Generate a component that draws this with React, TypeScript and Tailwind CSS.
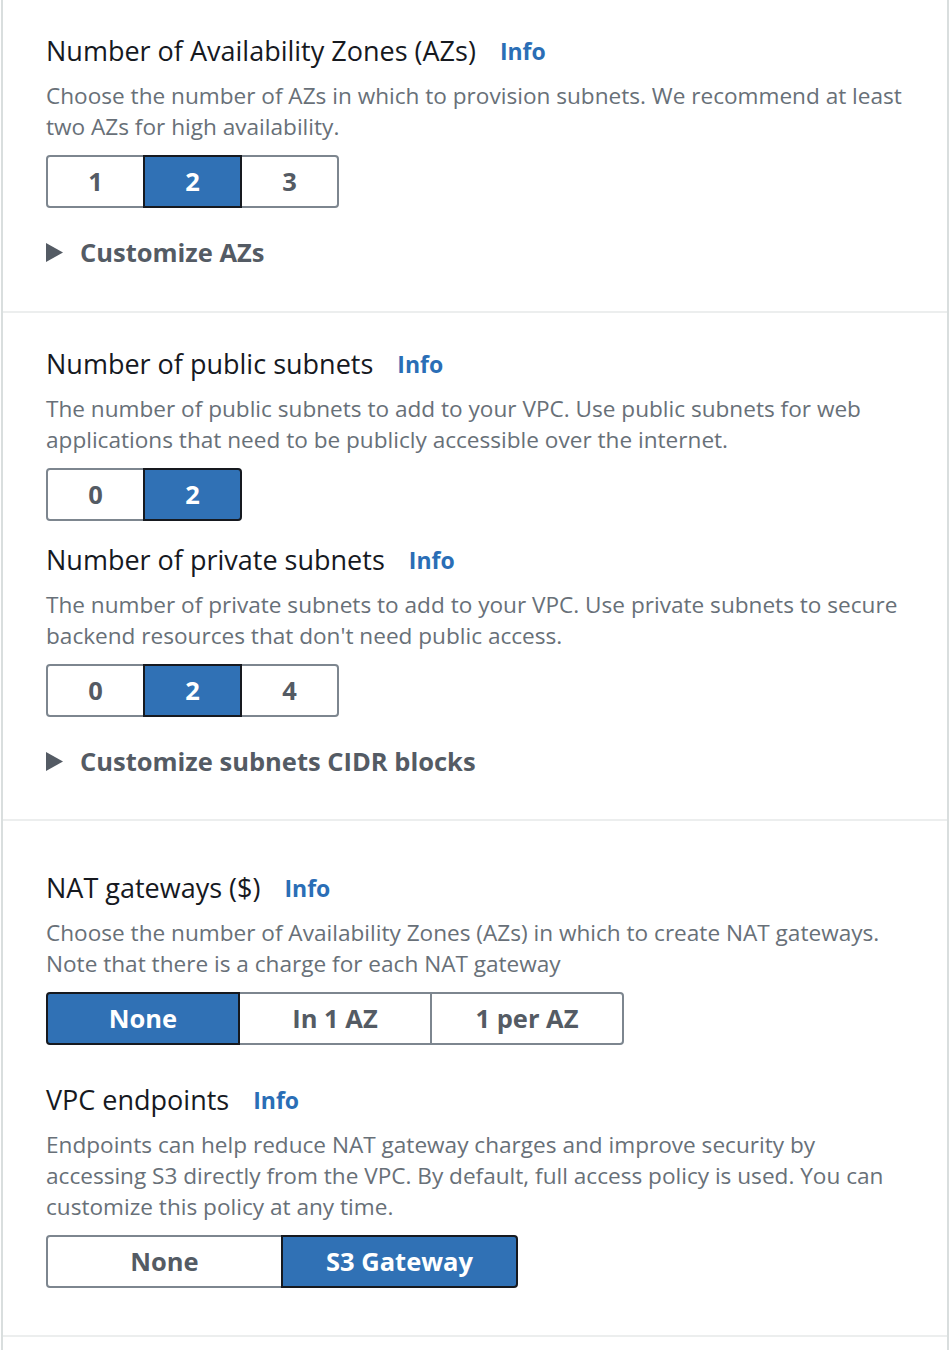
import React from 'react'

const font = { fontFamily: '"Open Sans", Lato, Arial, sans-serif' }

interface Option {
    label: string
    selected?: boolean
}

const Segmented = ({ options, width }: { options: Option[]; width: string }) => {
    return (
        <div className="flex h-[53px]">
            {options.map((opt, i) => {
                const first = i === 0
                const last = i === options.length - 1
                return (
                    <div
                        key={opt.label}
                        className={[
                            width,
                            'flex items-center justify-center border-2 text-[25.5px] font-bold',
                            first ? 'rounded-l-[4px]' : '-ml-[2px]',
                            last ? 'rounded-r-[4px]' : '',
                            opt.selected
                                ? 'relative z-10 border-[#16191f] bg-[#3071b5] text-white'
                                : 'border-[#7d868f] bg-white text-[#545b64]',
                        ].join(' ')}
                    >
                        {opt.label}
                    </div>
                )
            })}
        </div>
    )
}

const Field = ({
    title,
    description,
    options,
    width,
}: {
    title: string
    description: string
    options: Option[]
    width: string
}) => {
    return (
        <div className="flex flex-col">
            <div className="flex items-center h-8 leading-[32px]">
                <span className="text-[27px] text-[#16191f]">{title}</span>
                <span className="ml-6 text-[23px] font-bold text-[#2a6eb6]">Info</span>
            </div>
            <p className="mt-[13px] text-[22.6px] leading-[31px] text-[#687078] whitespace-pre-line">
                {description}
            </p>
            <div className="mt-[13px]">
                <Segmented options={options} width={width} />
            </div>
        </div>
    )
}

const Expander = ({ label }: { label: string }) => (
    <div className="flex items-center h-8">
        <svg width="17" height="19" viewBox="0 0 17 19" className="shrink-0">
            <path d="M0 0 L17 9.5 L0 19 Z" fill="#545b64" />
        </svg>
        <span className="ml-[17px] text-[25.5px] font-bold leading-[32px] text-[#545b64]">{label}</span>
    </div>
)

export default function App() {
    return (
        <div className="min-h-[1350px] bg-white pl-[1px]" style={font}>
            <div className="w-[948px] min-h-[1350px] border-l-2 border-r-2 border-[#d9dede] flex flex-col">
                <section className="pt-[35px] pb-[43px] pl-[43px]">
                    <Field
                        title="Number of Availability Zones (AZs)"
                        description={'Choose the number of AZs in which to provision subnets. We recommend at least\ntwo AZs for high availability.'}
                        options={[{ label: '1' }, { label: '2', selected: true }, { label: '3' }]}
                        width="w-[99px]"
                    />
                    <div className="mt-[28px]">
                        <Expander label="Customize AZs" />
                    </div>
                </section>

                <section className="border-t-2 border-[#eceeee] pt-[35px] pb-[42px] pl-[43px]">
                    <Field
                        title="Number of public subnets"
                        description={'The number of public subnets to add to your VPC. Use public subnets for web\napplications that need to be publicly accessible over the internet.'}
                        options={[{ label: '0' }, { label: '2', selected: true }]}
                        width="w-[99px]"
                    />
                    <div className="mt-[23px]">
                        <Field
                            title="Number of private subnets"
                            description={"The number of private subnets to add to your VPC. Use private subnets to secure\nbackend resources that don't need public access."}
                            options={[{ label: '0' }, { label: '2', selected: true }, { label: '4' }]}
                            width="w-[99px]"
                        />
                    </div>
                    <div className="mt-[28px]">
                        <Expander label="Customize subnets CIDR blocks" />
                    </div>
                </section>

                <section className="border-t-2 border-[#eceeee] pt-[51px] pb-[47px] pl-[43px]">
                    <Field
                        title="NAT gateways ($)"
                        description={'Choose the number of Availability Zones (AZs) in which to create NAT gateways.\nNote that there is a charge for each NAT gateway'}
                        options={[{ label: 'None', selected: true }, { label: 'In 1 AZ' }, { label: '1 per AZ' }]}
                        width="w-[194px]"
                    />
                    <div className="mt-[39px]">
                        <Field
                            title="VPC endpoints"
                            description={'Endpoints can help reduce NAT gateway charges and improve security by\naccessing S3 directly from the VPC. By default, full access policy is used. You can\ncustomize this policy at any time.'}
                            options={[{ label: 'None' }, { label: 'S3 Gateway', selected: true }]}
                            width="w-[237px]"
                        />
                    </div>
                </section>

                <section className="border-t-2 border-[#eceeee] flex-1" />
            </div>
        </div>
    )
}
